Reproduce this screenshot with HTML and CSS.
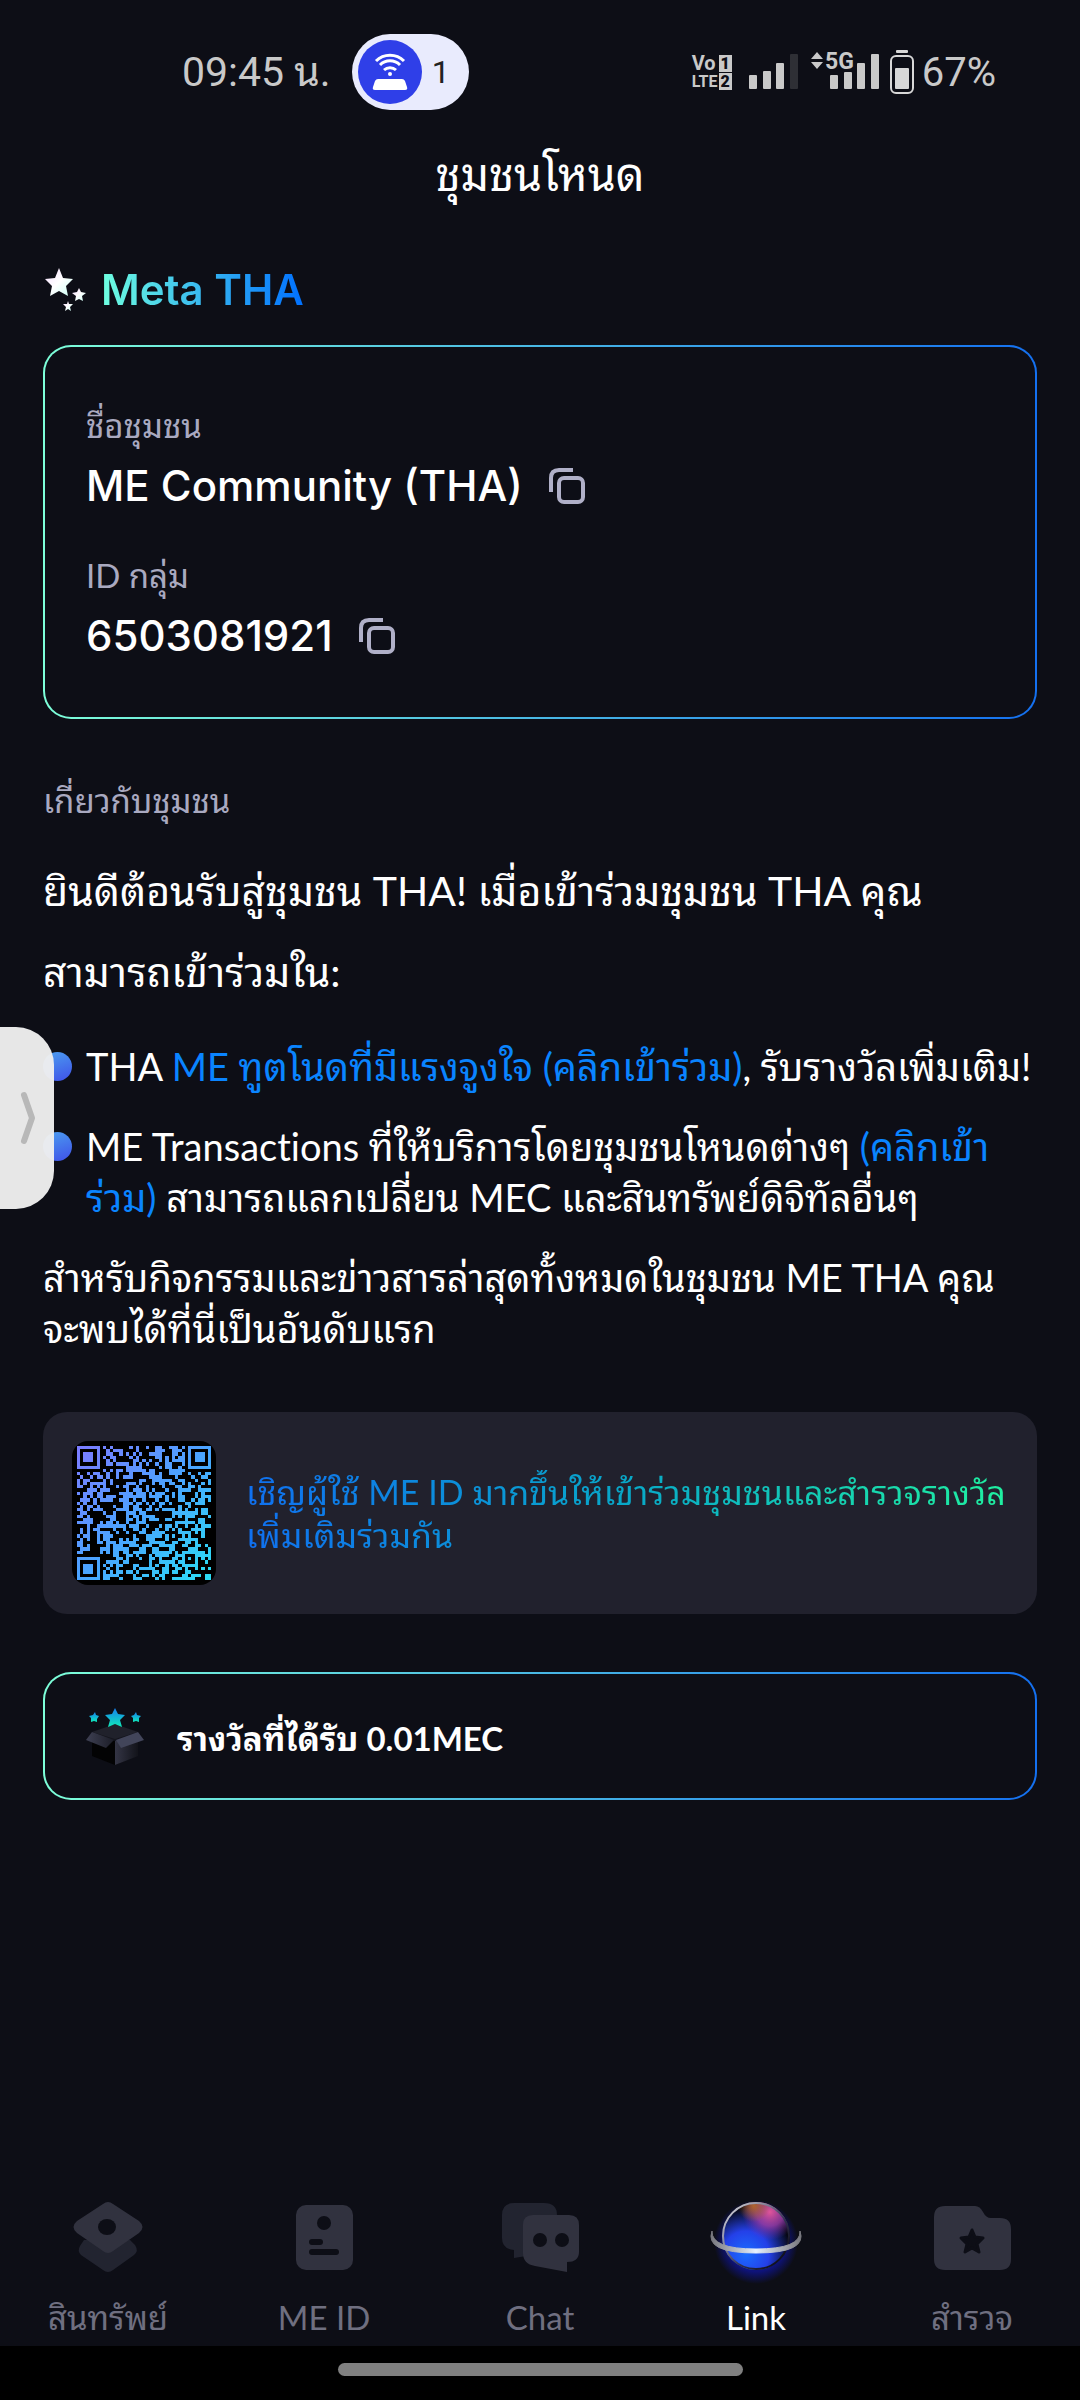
FILE: index.html
```html
<!DOCTYPE html>
<html lang="th">
<head>
<meta charset="utf-8">
<meta name="viewport" content="width=device-width, initial-scale=1">
<title>ชุมชนโหนด</title>
<link rel="stylesheet" href="styles.css">
</head>
<body>
<div class="status">
  <div class="status-side">
    <span class="clock">09:45 น.</span>
    <span class="hotspot">
      <svg class="hotspot-icon" viewBox="0 0 64 64" aria-hidden="true">
        <circle cx="32" cy="32" r="32" fill="#2f3fe8"/>
        <g fill="none" stroke="#fff" stroke-width="3">
          <path d="M18 21a20 20 0 0 1 28 0"/><path d="M22 25a14 14 0 0 1 20 0"/><path d="M26 30a9 9 0 0 1 12 0"/>
        </g>
        <circle cx="32" cy="34" r="2" fill="#fff"/>
        <path d="M20 39h24q2 0 3 2l2 6q1 3-2 3H17q-3 0-2-3l2-6q1-2 3-2z" fill="#fff"/>
      </svg>
      <span>1</span>
    </span>
  </div>
  <div class="status-side">
    <span class="volte"><span class="vo">Vo</span><b>1</b><span>LTE</span><b>2</b></span>
    <svg class="signals" viewBox="0 0 130 40" aria-hidden="true">
      <g fill="#c9c9c9">
        <rect x="0" y="23" width="8" height="14" rx="1"/><rect x="14" y="19" width="8" height="18" rx="1"/><rect x="27" y="11" width="8" height="26" rx="1"/>
        <path d="M62 7l6-7 6 7zM62 10l6 7 6-7z"/>
        <rect x="81" y="23" width="8" height="14" rx="1"/><rect x="95" y="20" width="8" height="17" rx="1"/><rect x="108" y="11" width="8" height="26" rx="1"/><rect x="122" y="2" width="8" height="35" rx="1"/>
      </g>
      <rect x="41" y="2" width="8" height="35" rx="1" fill="#2e2f35"/>
      <text x="76" y="17" class="net">5G</text>
    </svg>
    <svg class="battery" viewBox="0 0 24 44" aria-hidden="true">
      <rect x="6" y="0" width="12" height="3" rx="1" fill="#d8d8d8"/>
      <rect x="1" y="6" width="22" height="37" rx="5" fill="none" stroke="#d8d8d8" stroke-width="2"/>
      <rect x="5" y="18" width="14" height="21" rx="1" fill="#d8d8d8"/>
    </svg>
    <span class="percent">67%</span>
  </div>
</div>

<main class="content">
  <h1 class="title">ชุมชนโหนด</h1>
  <h2 class="brand">
    <svg class="stars" viewBox="0 0 44 44" aria-hidden="true">
      <defs><linearGradient id="shine" x1="0" x2="1" y1="0" y2="1"><stop offset="0" stop-color="#f5dcff"/><stop offset=".5" stop-color="#fff"/><stop offset="1" stop-color="#c9fff4"/></linearGradient></defs>
      <g fill="url(#shine)">
        <path d="M16 0l4 10 10 1-7 7 2 10-9-5-9 5 2-10-7-7 10-1z"/>
        <path d="M36 20l2 4 5 1-4 3 1 5-4-2-4 2 1-5-4-3 5-1z"/>
        <path d="M25 33l1 3 4 0-3 3 1 4-3-2-3 2 1-4-3-3 4 0z"/>
      </g>
    </svg>
    <span>Meta THA</span>
  </h2>

  <section class="outlined group">
    <div>
      <p class="label">ชื่อชุมชน</p>
      <p class="value">ME Community (THA)
        <button class="copy" aria-label="คัดลอกชื่อชุมชน"><svg viewBox="0 0 36 36"><path d="M2 24V10q0-8 8-8h14"/><rect x="10" y="10" width="24" height="24" rx="5"/></svg></button></p>
    </div>
    <div>
      <p class="label">ID กลุ่ม</p>
      <p class="value">6503081921
        <button class="copy" aria-label="คัดลอก ID กลุ่ม"><svg viewBox="0 0 36 36"><path d="M2 24V10q0-8 8-8h14"/><rect x="10" y="10" width="24" height="24" rx="5"/></svg></button></p>
    </div>
  </section>

  <section class="about">
    <h3 class="label">เกี่ยวกับชุมชน</h3>
    <p class="welcome">ยินดีต้อนรับสู่ชุมชน THA! เมื่อเข้าร่วมชุมชน THA คุณ<br>สามารถเข้าร่วมใน:</p>
    <ul class="bullets">
      <li>THA <a href="#ambassador">ME ทูตโนดที่มีแรงจูงใจ (คลิกเข้าร่วม)</a>, รับรางวัลเพิ่มเติม!</li>
      <li>ME Transactions ที่ให้บริการโดยชุมชนโหนดต่างๆ <a href="#transactions">(คลิกเข้า<br>ร่วม)</a> สามารถแลกเปลี่ยน MEC และสินทรัพย์ดิจิทัลอื่นๆ</li>
    </ul>
    <p class="news">สำหรับกิจกรรมและข่าวสารล่าสุดทั้งหมดในชุมชน ME THA คุณ<br>จะพบได้ที่นี่เป็นอันดับแรก</p>
  </section>

  <section class="invite">
    <svg class="qr" viewBox="0 0 44 44" role="img" aria-label="QR">
      <defs><linearGradient id="qr-ink" gradientUnits="userSpaceOnUse" x1="2" y1="2" x2="42" y2="42"><stop offset="0" stop-color="#7b7cff"/><stop offset=".5" stop-color="#4aa4ff"/><stop offset="1" stop-color="#2bdcf4"/></linearGradient></defs>
      <path id="qr-modules" fill="url(#qr-ink)" shape-rendering="crispEdges"/>
    </svg>
    <p class="invite-text">เชิญผู้ใช้ ME ID มากขึ้นให้เข้าร่วมชุมชนและสำรวจรางวัล<br>เพิ่มเติมร่วมกัน</p>
  </section>

  <section class="outlined reward">
    <svg class="box" viewBox="0 0 60 60" aria-hidden="true">
      <defs>
        <linearGradient id="star" x1="0" x2="0" y1="0" y2="1"><stop offset="0" stop-color="#1580f0"/><stop offset="1" stop-color="#10e8b8"/></linearGradient>
        <linearGradient id="side" x1="0" x2="1"><stop offset="0" stop-color="#343545"/><stop offset="1" stop-color="#12131a"/></linearGradient>
        <linearGradient id="flap" x1="0" x2="1"><stop offset="0" stop-color="#3e4053"/><stop offset="1" stop-color="#1c1d27"/></linearGradient>
      </defs>
      <path d="M6 27l23-9 23 9v22L29 59 6 50z" fill="#030304"/>
      <path d="M29 34l23-7v23l-23 9z" fill="url(#side)"/>
      <path d="M6 27l23-9 23 9-23 8z" fill="#14151d"/>
      <path d="M6 26l23-8v15zM52 26l-23-8v15z" fill="#20212b"/>
      <path d="M6 26l22 8-8 8-20-8z" fill="url(#flap)"/>
      <path d="M52 26l-22 8 5 8 23-8z" fill="#42455a"/>
      <g fill="url(#star)">
        <path d="M29 2l3 6 7 1-5 5 2 7-7-3-7 3 2-7-5-5 7-1z"/>
        <path d="M9 6l1 3 3 1-2 3 0 3-3-1-3 1 0-4-2-2 4-1z"/>
        <path d="M50 6l1 3 4 1-2 2 0 4-3-1-3 1 0-4-2-2 3-1z"/>
      </g>
    </svg>
    <p>รางวัลที่ได้รับ 0.01MEC</p>
  </section>
</main>

<nav class="tabs">
  <a href="#assets">
    <svg viewBox="0 0 80 80" aria-hidden="true"><path d="M12 42q-3 5 1 9l22 15q5 4 10 0l21-15q5-4 1-10l-5-5H16z" fill="#222430" transform="translate(0 8)"/><path d="M35 8q5-4 10 0l26 17q7 6 0 12L45 55q-5 4-10 0L9 37q-7-6 0-12z" fill="#31323f"/><ellipse cx="39" cy="31" rx="9" ry="8" fill="#0d0e16"/></svg>
    <span>สินทรัพย์</span>
  </a>
  <a href="#meid">
    <svg viewBox="0 0 80 80" aria-hidden="true"><rect x="12" y="9" width="57" height="65" rx="10" fill="#31323f"/><g fill="#0d0e16"><circle cx="40" cy="27" r="7"/><rect x="25" y="43" width="14" height="6" rx="3"/><rect x="25" y="53" width="30" height="6" rx="3"/></g></svg>
    <span>ME ID</span>
  </a>
  <a href="#chat">
    <svg viewBox="0 0 80 80" aria-hidden="true"><path d="M14 7h30q13 0 13 12v36l-43 7v-8Q2 53 2 42V19Q2 7 14 7z" fill="#222430"/><path d="M33 19h36q10 0 10 10v27q0 10-12 10v10l-32-6q-12-2-12-13V29q0-10 10-10z" fill="#31323f"/><g fill="#0d0e16"><circle cx="40" cy="44" r="7"/><circle cx="62" cy="44" r="7"/></g></svg>
    <span>Chat</span>
  </a>
  <a href="#link" class="active" aria-current="page">
    <svg viewBox="0 0 80 80" aria-hidden="true">
      <defs>
        <radialGradient id="glow"><stop offset=".7" stop-color="#1018e0" stop-opacity=".5"/><stop offset="1" stop-color="#1018e0" stop-opacity="0"/></radialGradient>
        <radialGradient id="sea" gradientUnits="userSpaceOnUse" cx="30" cy="58" r="46"><stop offset="0" stop-color="#1b6cff"/><stop offset=".5" stop-color="#2440e8"/><stop offset="1" stop-color="#2440e8" stop-opacity="0"/></radialGradient>
        <radialGradient id="dawn" gradientUnits="userSpaceOnUse" cx="54" cy="16" r="28"><stop offset="0" stop-color="#e0559a"/><stop offset=".5" stop-color="#a03fb0" stop-opacity=".8"/><stop offset="1" stop-color="#7030c0" stop-opacity="0"/></radialGradient>
        <radialGradient id="ember" gradientUnits="userSpaceOnUse" cx="38" cy="10" r="16"><stop offset="0" stop-color="#b0642c"/><stop offset="1" stop-color="#b0642c" stop-opacity="0"/></radialGradient>
        <linearGradient id="rim" x1="0" y1="0" x2="1" y2="1"><stop offset="0" stop-color="#e8e8ee"/><stop offset=".6" stop-color="#303050"/><stop offset="1" stop-color="#000"/></linearGradient>
        <linearGradient id="ring" x1="0" x2="1"><stop offset="0" stop-color="#77777d"/><stop offset=".5" stop-color="#e6f0ff"/><stop offset="1" stop-color="#77777d"/></linearGradient>
      </defs>
      <circle cx="40" cy="46" r="42" fill="url(#glow)"/>
      <circle cx="40" cy="40" r="34" fill="#05060c"/>
      <circle cx="40" cy="40" r="34" fill="url(#sea)"/>
      <circle cx="40" cy="40" r="34" fill="url(#dawn)"/>
      <circle cx="40" cy="40" r="34" fill="url(#ember)"/>
      <circle cx="40" cy="40" r="33" fill="none" stroke="url(#rim)" stroke-width="2"/>
      <path d="M-4 35q-8 22 44 22t44-22q1 18-44 18T-4 35z" fill="url(#ring)" stroke="url(#ring)"/>
    </svg>
    <span>Link</span>
  </a>
  <a href="#explore">
    <svg viewBox="0 0 80 80" aria-hidden="true"><path d="M13 10h30q5 0 8 6 3 6 8 6h9q11 0 11 11v30q0 11-11 11H13Q2 74 2 63V21q0-11 11-11z" fill="#31323f"/><path d="M40 34l3 7 8 1-6 6 2 8-7-4-7 4 2-8-6-6 8-1z" fill="#0d0e16" stroke="#0d0e16" stroke-width="3" stroke-linejoin="round"/></svg>
    <span>สำรวจ</span>
  </a>
</nav>
<div class="gesture"><span></span></div>

<button class="drawer" aria-label="เปิดแผง"><svg viewBox="0 0 16 54"><path d="M4 4l8 23-8 23"/></svg></button>
<script src="qr.js"></script>
</body>
</html>
```
FILE: styles.css
```css
* { box-sizing: border-box; }
body {
  margin: 0;
  min-height: 100vh;
  display: flex;
  flex-direction: column;
  background: #0d0e16;
  color: #fff;
  font-family: Lato, "Noto Sans Thai Looped", "Noto Looped Thai", "Noto Sans Thai", sans-serif;
  font-variant-ligatures: no-common-ligatures;
}
h1, h2, h3, p, ul { margin: 0; padding: 0; font-weight: 400; }
a { color: #0a84ff; text-decoration: none; }
svg { display: block; overflow: visible; }
button { border: 0; padding: 0; background: none; }

.status {
  display: flex;
  justify-content: space-between;
  align-items: center;
  height: 144px;
  padding: 0 84px 0 182px;
  font-family: Roboto, "Noto Sans Thai Looped", "Noto Sans Thai", sans-serif;
  color: #c9c9c9;
}
.status-side { display: flex; align-items: center; }
.clock { font-size: 41px; line-height: 48px; margin-right: 21px; }
.hotspot {
  display: flex;
  align-items: center;
  gap: 10px;
  width: 117px;
  height: 76px;
  padding-left: 6px;
  border-radius: 38px;
  background: #e9ebfd;
  color: #222;
  font-size: 32px;
}
.hotspot-icon { width: 64px; height: 64px; }
.volte {
  display: grid;
  grid-template-columns: 26px 13px;
  gap: 1px;
  margin-right: 17px;
  font: 700 16px/17px Roboto, sans-serif;
}
.volte .vo { font-size: 20px; }
.volte b { background: #c9c9c9; color: #0d0e16; text-align: center; }
.signals { width: 130px; height: 40px; margin-right: 11px; }
.net { font: 700 23px Roboto, sans-serif; fill: #c9c9c9; stroke: #0d0e16; stroke-width: 3px; paint-order: stroke; }
.battery { width: 24px; height: 44px; margin-right: 8px; }
.percent { font-size: 40px; }

.content { padding: 0 43px; }
.title { text-align: center; font-size: 45px; line-height: 60px; }
.brand { display: flex; align-items: center; gap: 14px; margin-top: 56px; line-height: 60px; font-family: Inter, sans-serif; font-size: 42px; font-weight: 600; }
.brand span, .invite-text { color: transparent; background-clip: text; -webkit-background-clip: text; }
.brand span { font-weight: 600; background-image: linear-gradient(90deg, #6fffe0, #0070ff); }
.stars { width: 44px; height: 44px; }
.outlined {
  border: 2px solid transparent;
  border-radius: 28px;
  background: linear-gradient(#0d0e16, #0d0e16) padding-box, linear-gradient(90deg, #7dffd9, #1470f0) border-box;
}
.group { display: flex; flex-direction: column; gap: 32px; margin-top: 25px; padding: 54px 41px 48px; }
.label { color: #a9a9c0; font-size: 33px; line-height: 48px; }
.value { display: flex; align-items: center; gap: 26px; margin-top: 4px; font-family: Inter, sans-serif; font-size: 42px; line-height: 66px; font-weight: 500; }
.copy { width: 36px; height: 36px; }
.copy svg { fill: none; stroke: #b0b0c8; stroke-width: 4; }

.about { margin-top: 57px; font-size: 38px; line-height: 51px; }
.welcome { margin-top: 26px; font-size: 41px; line-height: 81px; }
.bullets { list-style: none; margin-top: 29px; display: grid; gap: 29px; }
.bullets li { position: relative; padding-left: 43px; white-space: nowrap; }
.bullets li::before {
  content: "";
  position: absolute;
  left: 0;
  top: 11px;
  width: 29px;
  height: 29px;
  border-radius: 50%;
  background: linear-gradient(160deg, #4ca0f0, #3f50e8);
}
.news { margin-top: 29px; }

.invite { display: flex; align-items: center; gap: 30px; margin-top: 58px; padding: 29px; border-radius: 24px; background: #21212d; }
.qr { flex: none; width: 144px; height: 144px; border-radius: 16px; background: #000; }
.invite-text { flex: 1; font-size: 34px; line-height: 43px; white-space: nowrap; background-image: linear-gradient(90deg, #1070f0, #08a8c8 50%, #20f0a0); }
.reward { display: flex; align-items: center; gap: 31px; margin-top: 58px; height: 128px; padding: 0 41px; font-size: 33px; }
.reward p { font-weight: 700; }
.box { width: 60px; height: 60px; }

.tabs { display: grid; grid-template-columns: repeat(5, 1fr); margin-top: auto; }
.tabs a { display: flex; flex-direction: column; align-items: center; gap: 14px; padding-bottom: 2px; color: #6f6f80; font-size: 33px; line-height: 54px; }
.tabs svg { width: 80px; height: 80px; }
.tabs .active { color: #fff; }
.gesture { display: flex; justify-content: center; padding-top: 17px; height: 54px; background: #000; }
.gesture span { width: 405px; height: 13px; border-radius: 7px; background: #808080; }

.drawer {
  position: absolute;
  left: 0;
  top: 1027px;
  display: flex;
  align-items: center;
  justify-content: flex-end;
  width: 54px;
  height: 182px;
  padding-right: 18px;
  border-radius: 0 38px 38px 0;
  background: rgba(238, 238, 238, .97);
}
.drawer svg { width: 16px; height: 54px; fill: none; stroke: #b8b8b8; stroke-width: 6; stroke-linecap: round; stroke-linejoin: round; }
```
FILE: qr.js
```js
// Builds the invite code: three finders, one alignment mark and the data modules.
const SIZE = 41;
let seed = 20231;
const nextBit = () => {
  seed = (seed * 1103515245 + 12345) % 2147483648;
  return (seed >> 16) & 1;
};
const ring = (x, y, cx, cy) => Math.max(Math.abs(x - cx), Math.abs(y - cy));

let d = "";
for (let y = 0; y < SIZE; y++) {
  for (let x = 0; x < SIZE; x++) {
    let on = nextBit() === 1;
    for (const [cx, cy] of [[3, 3], [37, 3], [3, 37]]) {
      const r = ring(x, y, cx, cy);
      if (r <= 4) on = r < 2 || r === 3;
    }
    const a = ring(x, y, 34, 34);
    if (a <= 2) on = a !== 1;
    if (on) d += `M${x + 1.5} ${y + 1.5}h1v1h-1z`;
  }
}
document.getElementById("qr-modules").setAttribute("d", d);
```
